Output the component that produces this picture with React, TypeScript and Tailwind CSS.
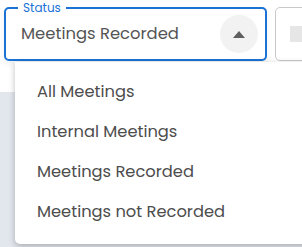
const OPTIONS = ["All Meetings", "Internal Meetings", "Meetings Recorded", "Meetings not Recorded"];

export default function App() {
  return (
    <div className="relative h-[247px] w-[302px] overflow-hidden bg-white font-['Poppins','Inter',sans-serif]">
      {/* page background behind the menu */}
      <div className="flex h-full flex-col">
        <div className="h-[92px] bg-white" />
        <div className="flex-1 bg-[#e2e6ed]" />
      </div>

      {/* filter row */}
      <div className="absolute left-[4px] top-[7px] flex gap-[8px]">
        <div className="relative flex h-[54px] w-[263px] items-center rounded-[5px] border-2 border-[#1a73d4] bg-white pl-[15px] pr-[7px] shadow-[0_4px_6px_rgba(0,0,0,0.06)]">
          <span className="absolute -top-[8px] left-[12px] bg-white px-[5px] text-[12px] leading-[14px] text-[#1a73d4]">
            Status
          </span>
          <span className="flex-1 text-[16.4px] text-[#555]">Meetings Recorded</span>
          <span className="flex h-[38px] w-[38px] items-center justify-center rounded-full bg-[#f2f2f2]">
            <svg width="12" height="7" viewBox="0 0 12 7">
              <path d="M0 7 L6 0 L12 7 Z" fill="#5f5f5f" />
            </svg>
          </span>
        </div>
        <div className="flex h-[54px] w-[60px] items-center rounded-[5px] border border-[#c9c9c9] bg-white pl-[14px]">
          <span className="h-[16px] w-[30px] bg-[#e6e6e6]" />
        </div>
      </div>

      {/* dropdown menu */}
      <ul className="absolute left-[15px] top-[62px] h-[182px] w-[300px] rounded-b-[5px] bg-white pt-[10px] shadow-[0_2px_6px_rgba(0,0,0,0.25)]">
        {OPTIONS.map((option) => (
          <li key={option} className="flex h-[40px] items-center pl-[22px] text-[16.3px] text-[#4d4d4d]">
            {option}
          </li>
        ))}
      </ul>
    </div>
  );
}
